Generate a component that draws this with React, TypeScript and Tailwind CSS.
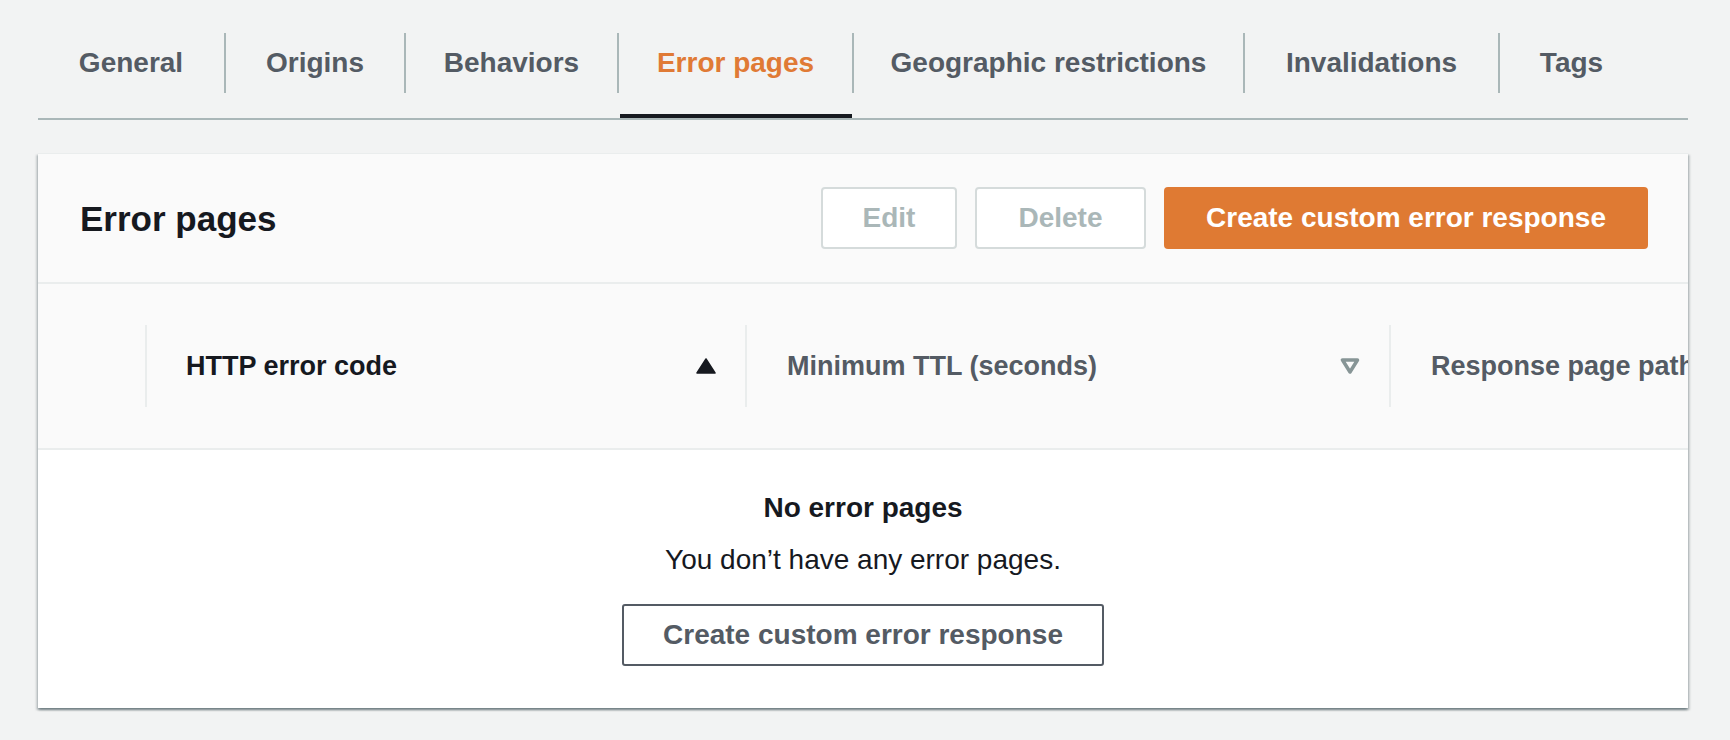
import React from "react";

interface Tab {
    label: string,
    width: string,
    active?: boolean,
}

const tabs: Tab[] = [
    { label: "General", width: "w-[186px]" },
    { label: "Origins", width: "w-[180px]" },
    { label: "Behaviors", width: "w-[213px]" },
    { label: "Error pages", width: "w-[235px]", active: true },
    { label: "Geographic restrictions", width: "w-[391px]" },
    { label: "Invalidations", width: "w-[255px]" },
    { label: "Tags", width: "w-[145px]" },
];

const SortUp = () => (
    <svg width="20" height="16" viewBox="0 0 20 16">
        <path d="M10 1 L19 15 L1 15 Z" fill="#16191f" stroke="#16191f" strokeWidth="1.5" strokeLinejoin="round" />
    </svg>
);

const SortDownOutline = () => (
    <svg width="20" height="16" viewBox="0 0 20 16">
        <path d="M2.5 2 L17.5 2 L10 14 Z" fill="none" stroke="#879596" strokeWidth="3.5" strokeLinejoin="round" />
    </svg>
);

const App = () => {
    return (
        <div className="w-[1730px] h-[740px] bg-[#f2f3f3] pl-[38px] pr-[42px] font-['Liberation_Sans',Arial,sans-serif] overflow-hidden">
            {/* tabs */}
            <div className="flex flex-row pt-[33px] border-b-2 border-[#aab7b8]">
                {tabs.map((tab, i) => (
                    <div key={tab.label} className={`${tab.width} flex flex-col`}>
                        <div
                            className={`h-[60px] flex items-center justify-center text-[28px] font-bold leading-none ${i > 0 ? "border-l-2 border-[#aab7b8]" : ""} ${tab.active ? "text-[#e07a35]" : "text-[#545b64]"}`}
                        >
                            {tab.label}
                        </div>
                        <div className="h-[21px]" />
                        <div className={`h-[4px] ${tab.active ? "bg-[#16191f] ml-[3px]" : ""}`} />
                    </div>
                ))}
            </div>

            {/* card */}
            <div className="mt-[33px] bg-white border-t border-[#eaeded] shadow-[0_2px_2px_0_rgba(0,28,36,0.35),2px_2px_2px_0_rgba(0,28,36,0.15),-2px_2px_2px_0_rgba(0,28,36,0.15)] overflow-hidden">
                <div className="h-[130px] bg-[#fafafa] border-b-2 border-[#eaeded] flex flex-row items-center justify-between pl-[42px] pr-[40px]">
                    <h2 className="text-[35px] font-bold text-[#16191f] leading-none">Error pages</h2>
                    <div className="flex flex-row gap-[18px] items-center">
                        <button className="w-[136px] h-[62px] rounded-[4px] border-2 border-[#d5dbdb] bg-white text-[28px] font-bold text-[#aab7b8]">
                            Edit
                        </button>
                        <button className="w-[171px] h-[62px] rounded-[4px] border-2 border-[#d5dbdb] bg-white text-[28px] font-bold text-[#aab7b8]">
                            Delete
                        </button>
                        <button className="w-[484px] h-[62px] rounded-[4px] bg-[#df7a33] text-[28px] font-bold text-white">
                            Create custom error response
                        </button>
                    </div>
                </div>

                {/* table header */}
                <div className="h-[166px] bg-[#fafafa] border-b-2 border-[#eaeded] flex flex-row items-center whitespace-nowrap">
                    <div className="w-[107px] shrink-0" />
                    <div className="w-[600px] shrink-0 h-[82px] border-l-2 border-[#eaeded] flex flex-row items-center justify-between pl-[39px] pr-[29px]">
                        <span className="text-[27px] font-bold text-[#16191f]">HTTP error code</span>
                        <SortUp />
                    </div>
                    <div className="w-[644px] shrink-0 h-[82px] border-l-2 border-[#eaeded] flex flex-row items-center justify-between pl-[40px] pr-[29px]">
                        <span className="text-[27px] font-bold text-[#545b64]">Minimum TTL (seconds)</span>
                        <SortDownOutline />
                    </div>
                    <div className="shrink-0 h-[82px] border-l-2 border-[#eaeded] flex flex-row items-center pl-[40px]">
                        <span className="text-[27px] font-bold text-[#545b64]">Response page path</span>
                    </div>
                </div>

                {/* empty state */}
                <div className="flex flex-col items-center pt-[38px] pb-[42px] text-[#16191f]">
                    <p className="text-[28px] font-bold leading-[40px]">No error pages</p>
                    <p className="text-[28px] leading-[40px] mt-[12px]">You don’t have any error pages.</p>
                    <button className="mt-[24px] w-[482px] h-[62px] rounded-[3px] border-2 border-[#545b64] bg-white text-[28px] font-bold text-[#545b64]">
                        Create custom error response
                    </button>
                </div>
            </div>
        </div>
    );
};

export default App
